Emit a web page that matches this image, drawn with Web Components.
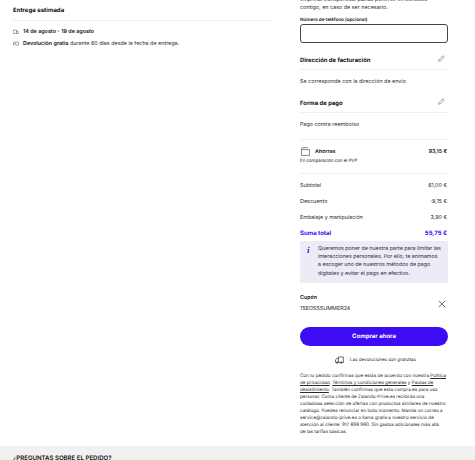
<!DOCTYPE html>
<html lang="es">
<head>
<meta charset="utf-8">
<style>
  html, body { margin: 0; height: 460px; overflow: hidden; background: #fff; }
  body { font-family: Inter, "Liberation Sans", sans-serif; color: #1a1a1a; text-rendering: geometricPrecision; }
</style>
</head>
<body>
<checkout-page></checkout-page>
<script>
const PENCIL = `<svg width="7" height="7" viewBox="0 0 7 7" fill="none" stroke="#555" stroke-width=".55"><path d="M.9 4.7 4.9.7l1.3 1.3-4 4-1.5.2Z"/></svg>`;

class SectionHead extends HTMLElement {
  constructor() {
    super();
    this.attachShadow({ mode: "open" });
  }

  connectedCallback() {
    this.shadowRoot.innerHTML = `
    <style>
      :host { display: flex; justify-content: space-between; align-items: center; box-sizing: border-box; height: var(--head-height, 27px); padding-top: var(--head-pad, 8px); border-bottom: 1px solid #efefef; font-size: 5.9px; font-weight: 700; color: #111; }
      .edit { display: flex; margin: 0 3px 3px 0; }
    </style>
    <span><slot></slot></span>
    <span class="edit">${PENCIL}</span>`;
  }
}

class PriceRow extends HTMLElement {
  constructor() {
    super();
    this.attachShadow({ mode: "open" });
  }

  connectedCallback() {
    this.shadowRoot.innerHTML = `
    <style>
      :host { display: flex; justify-content: space-between; align-items: center; height: 16px; padding-right: 1px; font-size: 5.4px; color: #2a2a2a; }
      :host([total]) { color: #3d0cf5; font-size: 6px; font-weight: 700; height: 15px; }
    </style>
    <span><slot></slot></span>
    <span>${this.getAttribute("value")}</span>`;
  }
}

class DeliveryPanel extends HTMLElement {
  constructor() {
    super();
    this.attachShadow({ mode: "open" });
  }

  connectedCallback() {
    this.shadowRoot.innerHTML = `
    <style>
      :host { display: block; padding: 0 0 0 13px; font-size: 5.4px; }
      h2 { margin: 0; height: 21px; line-height: 21px; box-sizing: border-box; border-bottom: 1px solid #efefef; font-size: 6px; font-weight: 700; color: #111; }
      .row { display: flex; align-items: center; gap: 4px; height: 12px; color: #2a2a2a; }
      .row:first-of-type { margin-top: 5px; }
      b { font-weight: 600; color: #111; }
      svg { flex: none; }
    </style>
    <h2>Entrega estimada</h2>
    <div class="row">
      <svg width="6" height="6" viewBox="0 0 6 6" fill="none" stroke="#444" stroke-width=".5"><path d="M.3 1h3.2v3.4H.3zM3.5 2h1.2l1 1.1v1.3h-2.2"/></svg>
      <span><b>14 de agosto - 19 de agosto</b></span>
    </div>
    <div class="row">
      <svg width="6" height="6" viewBox="0 0 6 6" fill="none" stroke="#444" stroke-width=".5"><path d="M1.8 1h3.8v3H2M1.8 1 .3 2.4h2.8M.3 2.4V4h1"/></svg>
      <span><b>Devolución gratis</b> durante 60 días desde la fecha de entrega.</span>
    </div>`;
  }
}

class OrderSummary extends HTMLElement {
  constructor() {
    super();
    this.attachShadow({ mode: "open" });
  }

  connectedCallback() {
    this.shadowRoot.innerHTML = `
    <style>
      :host { display: block; font-size: 5.4px; color: #2a2a2a; }
      .intro { margin: -4px 0 0; line-height: 8px; height: 16px; }
      label { display: block; margin-top: 5px; height: 7px; line-height: 7px; font-size: 4.6px; font-weight: 600; color: #111; }
      .field { height: 19px; box-sizing: border-box; border: 1px solid #444; border-radius: 3px; background: #fff; }
      .billing { --head-height: 27px; --head-pad: 8px; }
      .payment { --head-height: 24px; --head-pad: 5px; }
      .plain { height: 15px; display: flex; align-items: center; margin-top: 4px; }
      .save { box-sizing: border-box; height: 35px; margin-top: 7px; padding-top: 6px; border-top: 1px solid #efefef; border-bottom: 1px solid #efefef; }
      .save .top { display: flex; align-items: center; justify-content: space-between; height: 11px; padding-right: 1px; font-size: 5.3px; font-weight: 600; color: #111; }
      .save .top span:first-child { display: flex; align-items: center; gap: 5px; padding-left: 1px; }
      .save small { display: block; margin-top: 1px; line-height: 7px; font-size: 4.4px; color: #2a2a2a; }
      .prices { margin-top: 4px; }
      .note { display: flex; gap: 6px; box-sizing: border-box; height: 42px; padding: 4px 2px 0 7px; background: #edebf6; line-height: 8.2px; font-size: 5.3px; color: #2a2a3a; white-space: nowrap; }
      .note i { flex: none; width: 5px; color: #3d0cf5; font: italic 700 9px "Liberation Serif", serif; line-height: 10px; }
      .coupon { display: flex; justify-content: space-between; align-items: center; margin-top: 11px; height: 19px; line-height: 8px; }
      .coupon b { display: block; font-size: 5.3px; font-weight: 600; color: #111; margin-bottom: 3px; }
      .coupon svg { margin-right: 2px; }
      .buy { display: flex; align-items: center; justify-content: center; height: 19px; margin-top: 14px; border-radius: 10px; background: #3d0cf5; color: #fff; font-size: 6px; font-weight: 700; }
      .returns { display: flex; align-items: center; gap: 6px; height: 12px; margin-top: 8px; padding-left: 35px; font-size: 4.5px; }
      .legal { margin: 7px 0 0; line-height: 7px; font-size: 4.6px; color: #2a2a2a; white-space: nowrap; }
      u { text-underline-offset: 1px; }
    </style>
    <p class="intro">empresa transportista pueda ponerse en contacto<br>contigo, en caso de ser necesario.</p>
    <label>Número de teléfono (opcional)</label>
    <div class="field"></div>
    <div class="billing"><section-head>Dirección de facturación</section-head></div>
    <div class="plain">Se corresponde con la dirección de envío</div>
    <div class="payment"><section-head>Forma de pago</section-head></div>
    <div class="plain">Pago contra reembolso</div>
    <div class="save">
      <div class="top">
        <span>
          <svg width="9" height="9" viewBox="0 0 9 9" fill="none" stroke="#333" stroke-width=".6"><path d="M.4 2.6h8.2v5.8H.4zM.4 2.6 1.6.6h5.2"/></svg>
          Ahorras
        </span>
        <span>93,15 €</span>
      </div>
      <small>En comparación con el PVP</small>
    </div>
    <div class="prices">
      <price-row value="61,00 €">Subtotal</price-row>
      <price-row value="-9,15 €">Descuento</price-row>
      <price-row value="3,90 €">Embalaje y manipulación</price-row>
      <price-row total value="55,75 €">Suma total</price-row>
    </div>
    <div class="note">
      <i>i</i>
      <span>Queremos poner de nuestra parte para limitar las<br>interacciones personales. Por ello, te animamos<br>a escoger uno de nuestros métodos de pago<br>digitales y evitar el pago en efectivo.</span>
    </div>
    <div class="coupon">
      <span><b>Cupón</b>15EOSSSUMMER24</span>
      <svg width="8" height="8" viewBox="0 0 8 8" stroke="#333" stroke-width=".7"><path d="M.8.8l6.4 6.4M7.2.8.8 7.2"/></svg>
    </div>
    <div class="buy">Comprar ahora</div>
    <div class="returns">
      <svg width="9" height="8" viewBox="0 0 9 8" fill="none" stroke="#333" stroke-width=".7"><path d="M3.4 1h5v5.4H3.4zM3.4 2.4H1.8L.5 4v2.4h2.9"/><circle cx="2.2" cy="6.6" r=".8"/><circle cx="6.2" cy="6.6" r=".8"/></svg>
      <span>Las devoluciones son gratuitas</span>
    </div>
    <p class="legal">Con tu pedido confirmas que estás de acuerdo con nuestra <u>Política</u><br><u>de privacidad</u>, <u>Términos y condiciones generales</u> y <u>Pautas de</u><br><u>desistimiento</u>. También confirmas que esta compra es para uso<br>personal. Como cliente de Zalando-Prive.es recibirás una<br>cuidadosa selección de ofertas con productos similares de nuestro<br>catálogo. Puedes renunciar en todo momento. Manda un correo a<br>service@zalando-prive.es o llama gratis a nuestro servicio de<br>atención al cliente: 917 696 960. Sin gastos adicionales más allá<br>de las tarifas básicas.</p>`;
  }
}

class SiteFooter extends HTMLElement {
  constructor() {
    super();
    this.attachShadow({ mode: "open" });
  }

  connectedCallback() {
    this.shadowRoot.innerHTML = `
    <style>
      :host { display: block; box-sizing: border-box; height: 14px; padding: 9px 0 0 13px; line-height: 8px; background: #f1f1f1; font-size: 6.1px; font-weight: 600; color: #111; overflow: hidden; }
    </style>
    <slot></slot>`;
  }
}

class CheckoutPage extends HTMLElement {
  constructor() {
    super();
    this.attachShadow({ mode: "open" });
  }

  connectedCallback() {
    this.shadowRoot.innerHTML = `
    <style>
      :host { display: block; height: 460px; overflow: hidden; }
      .columns { display: grid; grid-template-columns: 272px 148px; column-gap: 28px; height: 446px; overflow: hidden; }
    </style>
    <div class="columns">
      <delivery-panel></delivery-panel>
      <order-summary></order-summary>
    </div>
    <site-footer>¿PREGUNTAS SOBRE EL PEDIDO?</site-footer>`;
  }
}

customElements.define("section-head", SectionHead);
customElements.define("price-row", PriceRow);
customElements.define("delivery-panel", DeliveryPanel);
customElements.define("order-summary", OrderSummary);
customElements.define("site-footer", SiteFooter);
customElements.define("checkout-page", CheckoutPage);
</script>
</body>
</html>
